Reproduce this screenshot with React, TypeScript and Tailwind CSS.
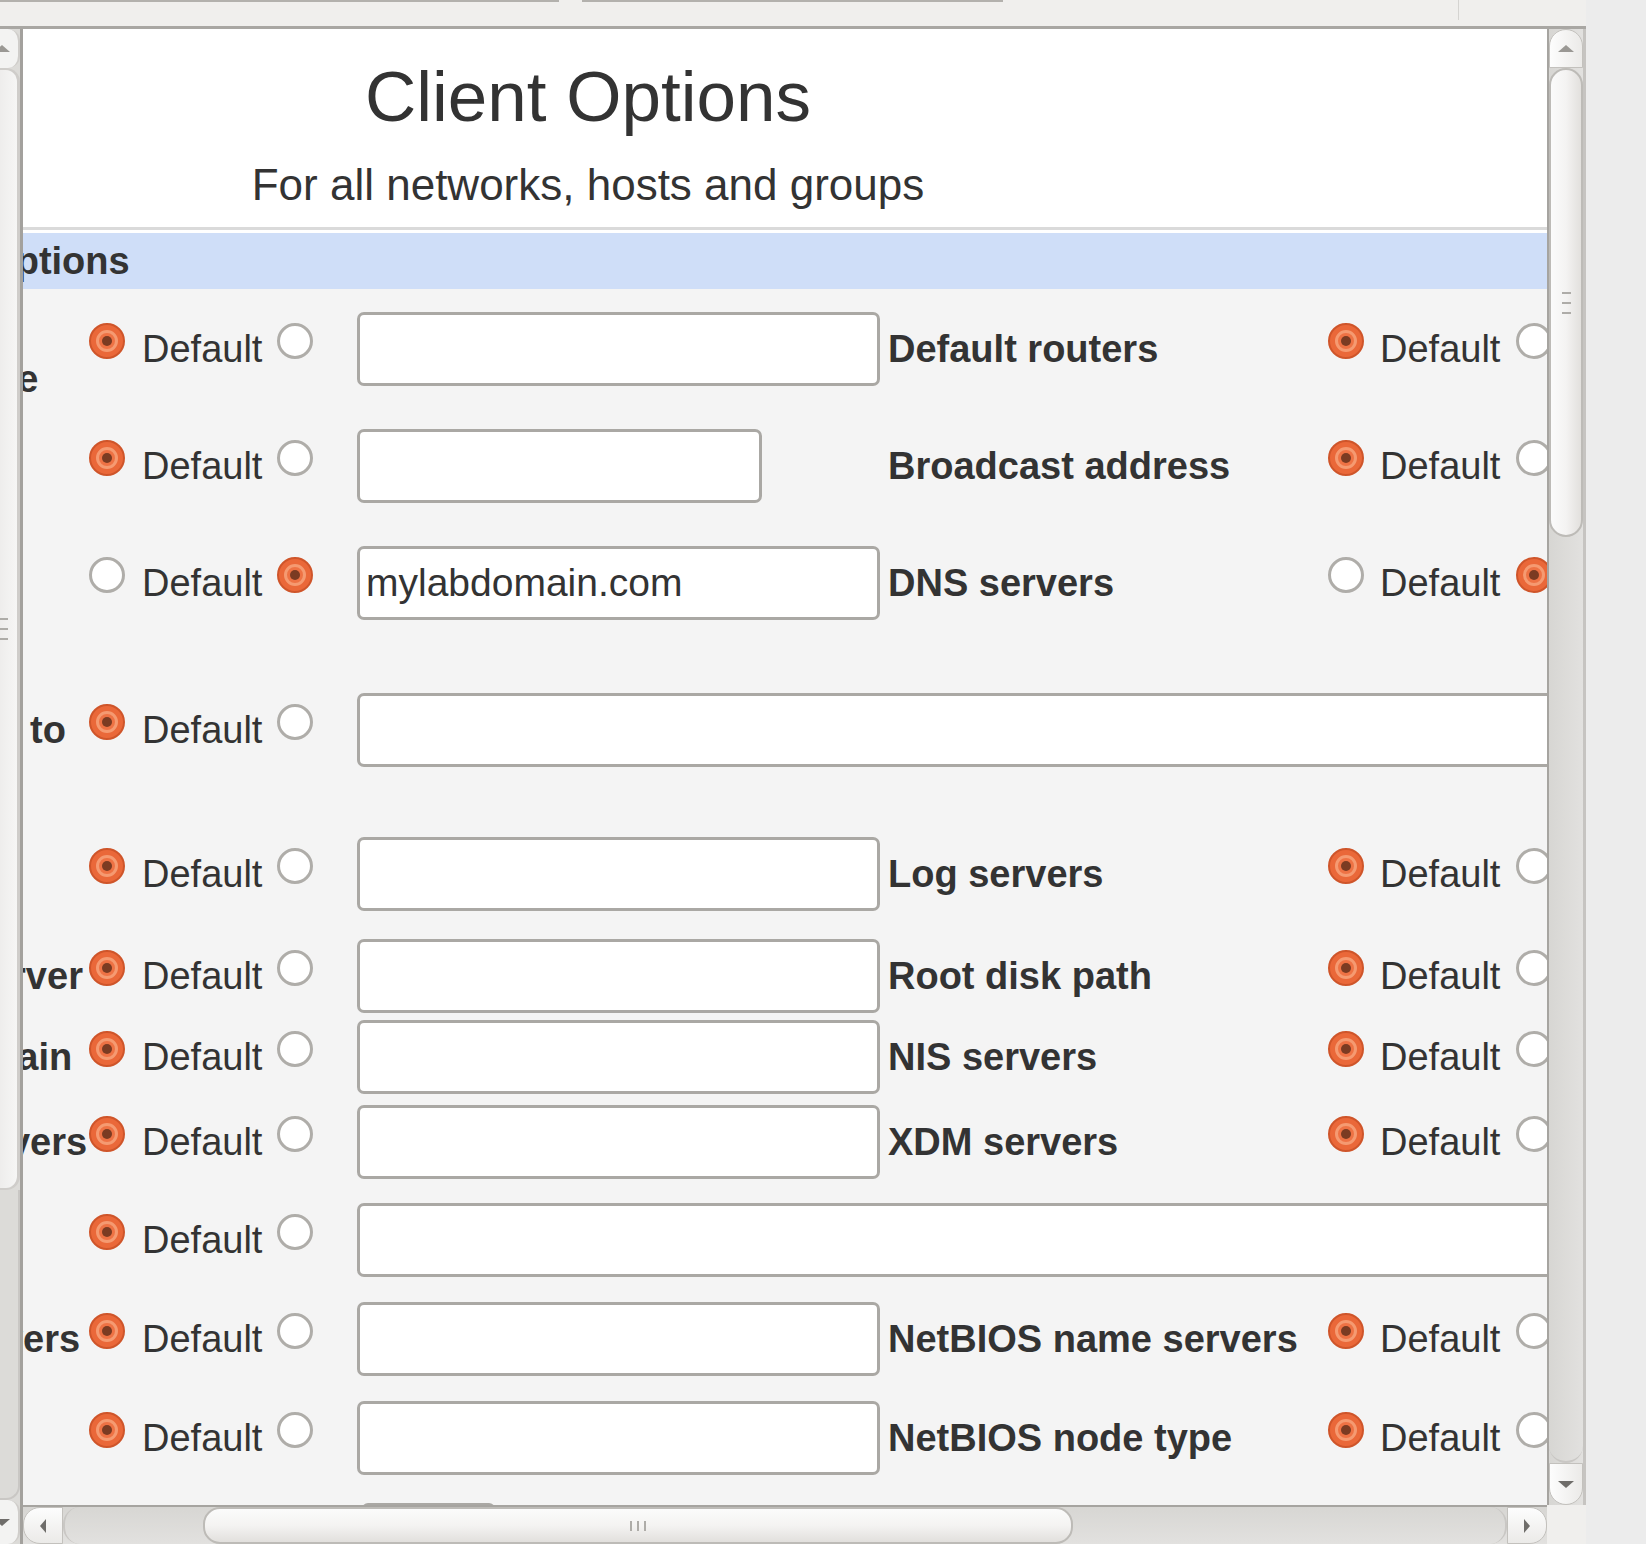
import React from "react";

const SANS = "font-['Liberation_Sans',Arial,sans-serif]";

type Sel = 0 | 1;

interface OptionRow {
  h: string;
  label: string[];
  sel: Sel;
  width?: string;
  value?: string;
  wide?: boolean;
  right?: { label: string; sel: Sel };
}

const rows: OptionRow[] = [
  { h: "h-[117px]", label: ["Client", "hostname"], sel: 0, width: "w-[523px]", right: { label: "Default routers", sel: 0 } },
  { h: "h-[117px]", label: ["Subnet", "mask"], sel: 0, width: "w-[405px]", right: { label: "Broadcast address", sel: 0 } },
  { h: "h-[147px]", label: ["Domain", "name"], sel: 1, width: "w-[523px]", value: "mylabdomain.com", right: { label: "DNS servers", sel: 1 } },
  { h: "h-[144px]", label: ["List of", "Domains to", "search"], sel: 0, wide: true },
  { h: "h-[102px]", label: ["Time", "servers"], sel: 0, width: "w-[523px]", right: { label: "Log servers", sel: 0 } },
  { h: "h-[81px]", label: ["Swap server"], sel: 0, width: "w-[523px]", right: { label: "Root disk path", sel: 0 } },
  { h: "h-[85px]", label: ["NIS Domain"], sel: 0, width: "w-[523px]", right: { label: "NIS servers", sel: 0 } },
  { h: "h-[98px]", label: ["Font servers"], sel: 0, width: "w-[523px]", right: { label: "XDM servers", sel: 0 } },
  { h: "h-[99px]", label: ["Static", "routes"], sel: 0, wide: true },
  { h: "h-[99px]", label: ["NTP servers"], sel: 0, width: "w-[523px]", right: { label: "NetBIOS name servers", sel: 0 } },
  { h: "h-[102px]", label: ["NetBIOS", "scope"], sel: 0, width: "w-[523px]", right: { label: "NetBIOS node type", sel: 0 } },
];

function Radio({ on }: { on: boolean }) {
  if (on) {
    return (
      <span className="self-start mt-[11px] w-[36px] h-[36px] shrink-0 rounded-full bg-[#ea6839] border-2 border-[#cf552a] flex items-center justify-center">
        <span className="w-[22px] h-[22px] rounded-full border-[3px] border-[#f59a71] bg-[#ee7244] flex items-center justify-center">
          <span className="w-[10px] h-[10px] rounded-full bg-[#7b3b22]" />
        </span>
      </span>
    );
  }
  return <span className="self-start mt-[11px] w-[36px] h-[36px] shrink-0 rounded-full bg-white border-[3px] border-[#afada9]" />;
}

function Choice({ sel, gap }: { sel: Sel; gap: "left" | "right" }) {
  return (
    <div className="flex items-center h-[74px] shrink-0">
      <Radio on={sel === 0} />
      <span className={gap === "left" ? "ml-[17px] mr-[15px]" : "ml-[16px] mr-[16px]"}>Default</span>
      <Radio on={sel === 1} />
    </div>
  );
}

function TextBox({ width, value }: { width: string; value?: string }) {
  return (
    <input
      type="text"
      readOnly
      defaultValue={value ?? ""}
      className={`${width} h-[74px] shrink-0 bg-white border-[3px] border-[#aaa8a4] rounded-[7px] pl-[6px] text-[39px] text-[#333] outline-none ${SANS}`}
    />
  );
}

function Row({ row }: { row: OptionRow }) {
  return (
    <div className={`${row.h} flex items-start`}>
      <div className="flex items-center h-[74px]">
        <div className="w-[230px] shrink-0 font-bold leading-[60px] whitespace-nowrap">
          {row.label.map((line, i) => (
            <div key={i}>{line}</div>
          ))}
        </div>
        <div className="w-[268px] shrink-0">
          <Choice sel={row.sel} gap="left" />
        </div>
        {row.wide ? (
          <TextBox width="w-[1300px]" />
        ) : (
          <>
            <div className="w-[531px] shrink-0">
              <TextBox width={row.width ?? "w-[523px]"} value={row.value} />
            </div>
            <div className="w-[440px] shrink-0 font-bold whitespace-nowrap">{row.right?.label}</div>
            <Choice sel={row.right?.sel ?? 0} gap="right" />
          </>
        )}
      </div>
    </div>
  );
}

function Triangle({ dir }: { dir: "up" | "down" | "left" | "right" }) {
  if (dir === "up") return <span className="w-0 h-0 border-x-[8px] border-x-transparent border-b-[7px] border-b-[#9a9894]" />;
  if (dir === "down") return <span className="w-0 h-0 border-x-[8px] border-x-transparent border-t-[7px] border-t-[#6f6d6a]" />;
  if (dir === "left") return <span className="w-0 h-0 border-y-[7px] border-y-transparent border-r-[6px] border-r-[#6f6d6a]" />;
  return <span className="w-0 h-0 border-y-[7px] border-y-transparent border-l-[6px] border-l-[#6f6d6a]" />;
}

function VScrollbar() {
  return (
    <div className="w-[39px] h-[1476px] flex flex-col border-l-2 border-[#a6a4a0] border-r-[3px] border-r-[#c6c4c1] bg-linear-to-r from-[#d7d6d3] to-[#e2e1df]">
      <div className="h-[39px] flex items-center justify-center rounded-t-[17px] border border-[#c3c1bd] bg-linear-to-r from-[#fdfdfd] to-[#ebeae8]">
        <Triangle dir="up" />
      </div>
      <div className="h-[469px] flex flex-col items-center justify-center gap-[8px] rounded-[17px] border-2 border-[#bdbbb7] bg-linear-to-r from-[#fbfbfb] via-[#f4f3f2] to-[#e2e0dd]">
        <span className="w-[9px] h-[2px] bg-[#aeaca8]" />
        <span className="w-[9px] h-[2px] bg-[#aeaca8]" />
        <span className="w-[9px] h-[2px] bg-[#aeaca8]" />
      </div>
      <div className="flex-1 rounded-b-[17px] border-b-2 border-[#c9c7c4]" />
      <div className="h-[42px] flex items-center justify-center rounded-b-[17px] border border-[#c3c1bd] bg-linear-to-r from-[#fdfdfd] to-[#ebeae8]">
        <Triangle dir="down" />
      </div>
    </div>
  );
}

function HScrollbar() {
  return (
    <div className="w-[1524px] h-[39px] flex border-t-2 border-[#a6a4a0] bg-linear-to-b from-[#d7d6d3] to-[#e2e1df]">
      <div className="w-[40px] flex items-center justify-center rounded-l-[17px] border border-[#c3c1bd] bg-linear-to-b from-[#fdfdfd] to-[#ebeae8]">
        <Triangle dir="left" />
      </div>
      <div className="w-[140px] rounded-l-[17px] border-l-2 border-[#c9c7c4]" />
      <div className="w-[870px] flex items-center justify-center gap-[5px] rounded-[17px] border-2 border-[#bdbbb7] bg-linear-to-b from-[#fbfbfb] via-[#f4f3f2] to-[#e2e0dd]">
        <span className="w-[2px] h-[10px] bg-[#aeaca8]" />
        <span className="w-[2px] h-[10px] bg-[#aeaca8]" />
        <span className="w-[2px] h-[10px] bg-[#aeaca8]" />
      </div>
      <div className="flex-1 rounded-r-[17px] border-r-2 border-[#c9c7c4]" />
      <div className="w-[40px] flex items-center justify-center rounded-r-[17px] border border-[#c3c1bd] bg-linear-to-b from-[#fdfdfd] to-[#ebeae8]">
        <Triangle dir="right" />
      </div>
    </div>
  );
}

function LeftStrip() {
  return (
    <div className="w-[20px] h-[1515px] flex flex-col overflow-hidden bg-[#dcdbd8]">
      <div className="h-[39px] flex items-center bg-[#f3f3f2] rounded-r-[12px] border-r-2 border-[#cfcdca]">
        <span className="-ml-[6px] w-0 h-0 border-x-[8px] border-x-transparent border-b-[7px] border-b-[#9a9894]" />
      </div>
      <div className="h-[1122px] flex flex-col justify-center gap-[8px] rounded-r-[14px] border-r-[3px] border-y-2 border-[#cfcdca] bg-linear-to-r from-[#eeedec] to-[#f6f6f5]">
        <span className="w-[8px] h-[2px] bg-[#aeaca8]" />
        <span className="w-[8px] h-[2px] bg-[#aeaca8]" />
        <span className="w-[8px] h-[2px] bg-[#aeaca8]" />
      </div>
      <div className="flex-1 rounded-br-[14px] border-r-2 border-b-2 border-[#c9c7c4]" />
      <div className="h-[44px] flex items-center bg-[#f3f3f2] rounded-r-[12px] border-r-2 border-[#cfcdca]">
        <span className="-ml-[6px] w-0 h-0 border-x-[8px] border-x-transparent border-t-[7px] border-t-[#6f6d6a]" />
      </div>
    </div>
  );
}

export default function App() {
  return (
    <div className={`w-[1646px] h-[1544px] flex bg-[#ececec] text-[#333] ${SANS}`}>
      <div className="w-[1586px] flex flex-col bg-[#f0efed]">
        {/* toolbar edge */}
        <div className="h-[29px] flex items-start border-b-[3px] border-[#a9a7a3]">
          <span className="w-[559px] h-[2px] bg-[#b3b1ad]" />
          <span className="ml-[23px] w-[421px] h-[2px] bg-[#b3b1ad]" />
          <span className="ml-[455px] w-[1px] h-[20px] bg-[#d5d4d1]" />
        </div>

        <div className="flex h-[1515px]">
          <LeftStrip />
          <div className="w-[3px] bg-[#a3a19d]" />
          <div className="w-[1563px] flex flex-col">
            <div className="flex h-[1476px]">
              {/* page viewport, scrolled right */}
              <div className="w-[1524px] h-[1476px] overflow-hidden bg-[#f4f4f4] text-[38px] leading-[44px]">
                <div className="-ml-[164px] w-[1900px]">
                  <div className="h-[198px] bg-white pt-[28px]">
                    <div className="w-[1458px] text-center">
                      <h1 className="text-[71px] leading-[80px] font-normal">Client Options</h1>
                      <p className="mt-[23px] text-[44px] leading-[50px]">For all networks, hosts and groups</p>
                    </div>
                  </div>
                  <div className="h-[3px] bg-[#dadada]" />
                  <div className="h-[3px] bg-white" />
                  <div className="h-[56px] bg-[#cfdef8] flex items-center pl-[11px] font-bold">Client Options</div>

                  <div className="pt-[23px]">
                    {rows.map((row, i) => (
                      <Row key={i} row={row} />
                    ))}
                    <div className="flex h-[74px]">
                      <div className="w-[503px] shrink-0" />
                      <div className="w-[133px] h-[74px] border-[3px] border-[#aaa8a4] rounded-[6px] bg-white" />
                    </div>
                  </div>
                </div>
              </div>
              <VScrollbar />
            </div>
            <div className="flex h-[39px]">
              <HScrollbar />
              <div className="w-[39px] bg-[#f0efed]" />
            </div>
          </div>
        </div>
      </div>
    </div>
  );
}
